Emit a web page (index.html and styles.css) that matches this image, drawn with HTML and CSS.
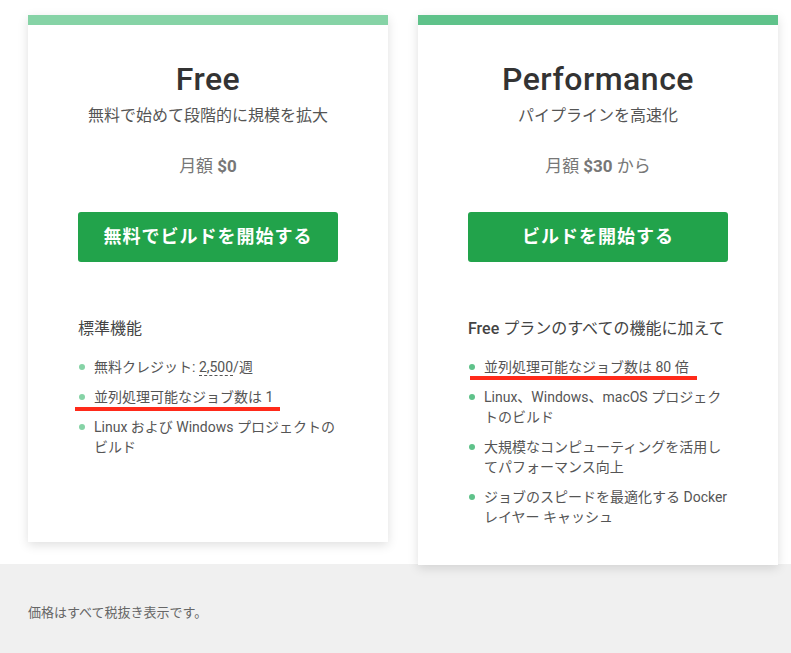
FILE: index.html
```html
<!DOCTYPE html>
<html lang="ja">
<head>
    <meta charset="UTF-8">
    <meta name="viewport" content="width=device-width, initial-scale=1.0">
    <title>料金プラン</title>
    <link rel="stylesheet" href="styles.css">
</head>
<body>
    <div class="plans">
        <div class="card card-free">
            <h2>Free</h2>
            <p class="tagline">無料で始めて段階的に規模を拡大</p>
            <p class="price">月額 <strong>$0</strong></p>
            <a class="btn" href="#">無料でビルドを開始する</a>
            <h3>標準機能</h3>
            <ul class="features">
                <li>無料クレジット: <span class="dotted">2,500</span>/週</li>
                <li class="marked mark-free">並列処理可能なジョブ数は 1</li>
                <li>Linux および Windows プロジェクトのビルド</li>
            </ul>
        </div>

        <div class="card card-perf">
            <h2>Performance</h2>
            <p class="tagline">パイプラインを高速化</p>
            <p class="price">月額 <strong>$30</strong> から</p>
            <a class="btn" href="#">ビルドを開始する</a>
            <h3><span class="plan-name">Free</span> プランのすべての機能に加えて</h3>
            <ul class="features">
                <li class="marked mark-perf">並列処理可能なジョブ数は 80 倍</li>
                <li>Linux、Windows、macOS プロジェクトのビルド</li>
                <li>大規模なコンピューティングを活用してパフォーマンス向上</li>
                <li>ジョブのスピードを最適化する Docker レイヤー キャッシュ</li>
            </ul>
        </div>
    </div>

    <footer>
        <p>価格はすべて税抜き表示です。</p>
    </footer>
</body>
</html>
```

FILE: styles.css
```css
body {
    margin: 0;
    padding: 0;
    background-color: #fff;
    font-family: Roboto, "Noto Sans CJK JP", sans-serif;
    color: #555;
}
.plans {
    display: flex;
    align-items: flex-start;
    gap: 30px;
    padding: 15px 0 0 28px;
    position: relative;
    z-index: 1;
    margin-bottom: -1px;
}
.card {
    width: 260px;
    padding: 34px 50px 28px;
    background: white;
    border-top: 10px solid #86d3a6;
    box-shadow: 0 3px 10px rgba(0, 0, 0, 0.13);
    text-align: center;
}
.card-free {
    padding-bottom: 75px;
}
.card-perf {
    border-top-color: #5fc28a;
}
.card h2 {
    margin: 0;
    font-size: 32px;
    line-height: 40px;
    font-weight: 500;
    letter-spacing: 0.5px;
    color: #333;
}
.tagline {
    margin: 5px 0 0;
    font-size: 16px;
    line-height: 24px;
    color: #555;
}
.price {
    margin: 26px 0 0;
    font-size: 17px;
    line-height: 24px;
    color: #777;
}
.price strong {
    font-weight: 700;
}
.btn {
    display: block;
    margin-top: 34px;
    height: 50px;
    line-height: 50px;
    background-color: #22a34b;
    border-radius: 3px;
    color: white;
    font-size: 18px;
    font-weight: 700;
    letter-spacing: 1px;
    text-decoration: none;
}
.card h3 {
    margin: 55px 0 0;
    font-size: 16px;
    line-height: 24px;
    font-weight: 400;
    text-align: left;
    color: #444;
}
.plan-name {
    font-weight: 500;
}
.features {
    list-style: none;
    margin: 16px 0 0;
    padding: 0;
    text-align: left;
}
.features li {
    position: relative;
    padding-left: 16px;
    margin-bottom: 10px;
    font-size: 14px;
    line-height: 20px;
    color: #555;
}
.features li::before {
    content: "";
    position: absolute;
    left: 1px;
    top: 7px;
    width: 6px;
    height: 6px;
    border-radius: 50%;
    background-color: #86d3a6;
}
.card-perf .features li::before {
    background-color: #5fc28a;
}
.dotted {
    border-bottom: 1px dashed #555;
}
.marked::after {
    content: "";
    position: absolute;
    height: 4px;
    background-color: #ff2a1a;
}
.mark-free::after {
    left: -3px;
    top: 20px;
    width: 205px;
}
.mark-perf::after {
    left: 2px;
    top: 19px;
    width: 227px;
}
footer {
    height: 90px;
    background-color: #f0f0f0;
    padding: 0 28px;
    display: flex;
    align-items: center;
}
footer p {
    margin: 4px 0 0;
    font-size: 13px;
    color: #666;
}
```
